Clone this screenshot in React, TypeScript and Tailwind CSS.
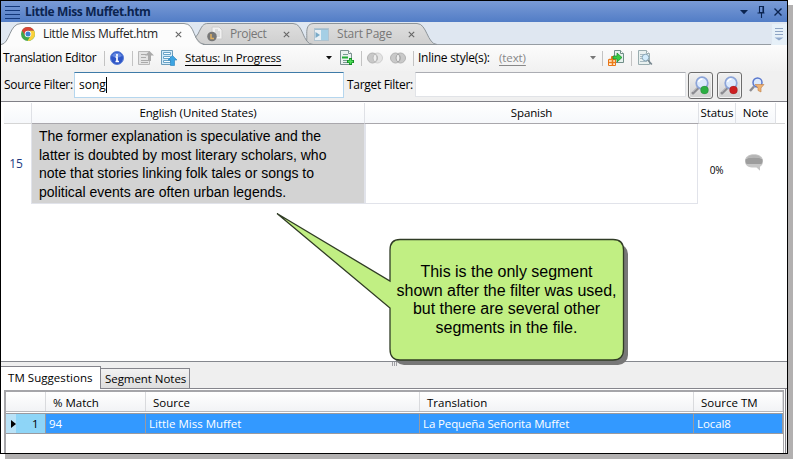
import React from "react";

const ui = "font-['Open_Sans','Noto_Sans',sans-serif] whitespace-nowrap";

function Close({ color = "#666" }: { color?: string }) {
  return (
    <svg width="7" height="7" viewBox="0 0 7 7" className="shrink-0">
      <path d="M.8 .8L6.2 6.2M6.2 .8L.8 6.2" stroke={color} strokeWidth="1.1" />
    </svg>
  );
}

function Sep({ className = "" }: { className?: string }) {
  return <div className={`h-[15px] w-px shrink-0 bg-[#c3c3c3] ${className}`} />;
}

function TitleBar() {
  return (
    <div className="flex h-[21px] shrink-0 items-center bg-linear-to-b from-[#7a9bd6] to-[#527dc6]">
      <svg width="15" height="14" viewBox="0 0 15 14" className="ml-1 shrink-0">
        <path d="M0 1.5H15M0 5.5H15M0 9.5H15M0 13.5H15" stroke="#14387a" />
      </svg>
      <span className={`${ui} ml-[5px] text-[12px] leading-[20px] font-bold tracking-[-0.38px] text-[#0b2450]`}>Little Miss Muffet.htm</span>
      <svg width="50" height="14" viewBox="0 0 50 14" className="mr-[2px] ml-auto shrink-0">
        <path d="M5 5h8L9 9.300z" fill="#0b2450" />
        <path d="M24.500 1.500h4v6h-4zM22.500 8h7M26.500 8v5M28 2v6" stroke="#0b2450" fill="none" strokeWidth="1.100" />
        <path d="M39.500 3.500l7 7M46.500 3.500l-7 7" stroke="#0b2450" strokeWidth="1.400" />
      </svg>
    </div>
  );
}

function Chrome() {
  return (
    <svg width="14" height="14" viewBox="0 0 14 14" className="shrink-0">
      <circle cx="7" cy="7" r="7" fill="#3fa64b" />
      <path d="M.9 3.500A7 7 0 0 1 13.100 3.800H7L4.300 8.500z" fill="#d94437" />
      <path d="M13.100 3.800A7 7 0 0 1 6.500 14L9.800 8.500L9 3.800z" fill="#fbd13c" />
      <circle cx="7" cy="7" r="3.300" fill="#fff" />
      <circle cx="7" cy="7" r="2.500" fill="#3e7fd0" />
    </svg>
  );
}

function Tabs() {
  return (
    <div className="relative flex h-[23px] shrink-0 items-center bg-[#dfe7f1]">
      <svg width="786" height="23" viewBox="1 22 786 23" className="absolute top-0 left-0">
        <defs>
          <linearGradient id="inactive" x1="0" y1="0" x2="0" y2="1">
            <stop offset="0" stopColor="#dedede" />
            <stop offset="1" stopColor="#cfcfcf" />
          </linearGradient>
        </defs>
        <rect x="772" y="24" width="15" height="21" fill="#e6f0f8" />
        <path d="M0 44.500H771" stroke="#969da3" />
        <path d="M304 44.500C311 43 301 23.500 314 23.500H417C427 23.500 427 44 437 44.500z" fill="url(#inactive)" stroke="#8d9499" />
        <path d="M190 44.500L198 34C202 26 203 23.500 208 23.500H293C304 23.500 302 44 313 44.500z" fill="url(#inactive)" stroke="#8d9499" />
        <path d="M1 44.500C10 44 9 23.500 21 23.500H184C196 23.500 192 43 203 44.500V46H1z" fill="#fcfcfc" />
        <path d="M1 44.500C10 44 9 23.500 21 23.500H184C196 23.500 192 43 205 44.500" fill="none" stroke="#8d9499" />
        <path d="M775 28.500h8M775 31.500h8M775 34.500h8" stroke="#8da4c4" />
        <path d="M774.500 37.500h9l-4.500 3z" fill="#8fa9cd" />
      </svg>
      <div className="relative flex h-full w-full items-center pt-px">
        <div className="flex w-[201px] items-center pl-[20px]">
          <Chrome />
          <span className={`${ui} ml-[8px] w-[132px] text-[12px] leading-[22px] tracking-[-0.34px] text-[#1e1e1e]`}>Little Miss Muffet.htm</span>
          <Close />
        </div>
        <div className="flex w-[112px] items-center pl-[5px]">
          <svg width="16" height="16" viewBox="0 0 16 16" className="shrink-0">
            <path d="M5 1h7l3 3v9H5z" fill="#f1f1f1" stroke="#ccc" />
            <path d="M8 4h3M8 6h5M9 8h4M10 10h3" stroke="#bbb" strokeWidth=".8" />
            <circle cx="5" cy="10.500" r="4.800" fill="#777" />
            <path d="M4 8v4.500h3" stroke="#e0b060" fill="none" strokeWidth="1.500" />
          </svg>
          <span className={`${ui} ml-[7px] w-[53px] text-[12px] leading-[22px] tracking-[-0.4px] text-[#777]`}>Project</span>
          <Close />
        </div>
        <div className="flex items-center">
          <svg width="15" height="13" viewBox="0 0 15 13" className="shrink-0">
            <rect x=".5" y=".5" width="14" height="12" fill="#e8eff4" stroke="#b1c3cf" />
            <rect x="7" y="2" width="7" height="10" fill="#a5cfe5" />
            <path d="M1 1.500h13" stroke="#9dbdd0" />
            <path d="M1.500 4L6 7L1.500 10z" fill="#79aac8" />
          </svg>
          <span className={`${ui} ml-[8px] w-[71px] text-[12px] leading-[22px] tracking-[-0.2px] text-[#777]`}>Start Page</span>
          <Close />
        </div>
      </div>
    </div>
  );
}

function Page({ children, color = "#7b9190" }: { children?: React.ReactNode; color?: string }) {
  return (
    <svg width="16" height="16" viewBox="0 0 16 16" className="shrink-0">
      <path d="M.5 .5h8l3 3v11h-11z" fill="#e9f1f0" stroke={color} />
      <path d="M8.500 .5v3h3" fill="#fff" stroke={color} />
      {children}
    </svg>
  );
}

function Toolbar() {
  return (
    <div className="flex h-[26px] shrink-0 items-center bg-linear-to-b from-[#fcfcfc] to-[#f1f1f1]">
      <span className={`${ui} ml-[2px] w-[101px] text-[12px] tracking-[-0.34px]`}>Translation Editor</span>
      <Sep />
      <svg width="14" height="14" viewBox="0 0 14 14" className="ml-[5px] shrink-0">
        <circle cx="7" cy="7" r="6.500" fill="#2e55c6" stroke="#5c80d8" />
        <path d="M2 5a5.500 5.500 0 0 1 10 0q-5 3-10 0" fill="#6489e2" />
        <path d="M7 3v2M5.500 6H7v4M5.500 10.500h3.500" stroke="#fff" strokeWidth="1.700" fill="none" />
      </svg>
      <Sep className="ml-[8px]" />
      <svg width="16" height="16" viewBox="0 0 16 16" className="ml-[5px] shrink-0">
        <path d="M.5 1.500h11v13H.5z" fill="#e4e4e4" stroke="#b9b9b9" />
        <path d="M3 4.500h5M3 7.500h5M3 10.500h7M3 12.500h7" stroke="#aaa" />
        <path d="M11.500 1L16 5.500h-3V11h-3V5.500H7z" fill="#aaa" />
      </svg>
      <svg width="16" height="16" viewBox="0 0 16 16" className="ml-[7px] shrink-0">
        <path d="M.5 .5h11v14H.5z" fill="#d5edfb" stroke="#6c9cba" />
        <path d="M2.500 2.500h7v2h-7zM2.500 6.500h7v2h-7zM2.500 10.500h7v2h-7z" fill="#f7fdff" stroke="#68a3c8" />
        <path d="M11.500 5.500L16 10h-2.500v5.500h-4V10H7z" fill="#3ca4e2" stroke="#247fbd" strokeWidth=".6" />
      </svg>
      <span className={`${ui} ml-[8px] w-[141px] text-[11.500px] leading-[14px] tracking-[-0.18px] underline underline-offset-[3px]`}>Status: In Progress</span>
      <svg width="6" height="4" className="shrink-0"><path d="M0 0h6L3 3.500z" fill="#111" /></svg>
      <div className="ml-[8px] flex">
        <Page>
          <path d="M3 4.500h5M3 10.500h4M3 12.500h4" stroke="#789b92" />
          <path d="M2 7.500h6" stroke="#22ad36" strokeWidth="2" />
          <path d="M10.500 8v7M7 11.500h7" stroke="#168e28" strokeWidth="3" />
          <path d="M10.500 9v5M8 11.500h5" stroke="#4ede58" strokeWidth="1.500" />
        </Page>
      </div>
      <Sep className="ml-[5px]" />
      <svg width="16" height="12" viewBox="0 0 16 12" className="ml-[5px] shrink-0">
        <circle cx="10.500" cy="6" r="5" fill="#e3e3e3" stroke="#cfcfcf" />
        <circle cx="5.500" cy="6" r="5" fill="#c8c8c8" stroke="#b2b2b2" />
        <path d="M8 2a5 5 0 0 1 0 8a5 5 0 0 1 0-8" fill="#eee" stroke="#bbb" />
      </svg>
      <svg width="16" height="12" viewBox="0 0 16 12" className="ml-[7px] shrink-0">
        <circle cx="10.500" cy="6" r="5" fill="#c9c9c9" stroke="#b2b2b2" />
        <circle cx="5.500" cy="6" r="5" fill="#c9c9c9" stroke="#b2b2b2" />
        <path d="M8 2a5 5 0 0 1 0 8a5 5 0 0 1 0-8" fill="#eee" stroke="#a4a4a4" />
      </svg>
      <Sep className="ml-[7px]" />
      <span className={`${ui} ml-[4px] w-[81px] text-[12px] tracking-[-0.26px]`}>Inline style(s):</span>
      <span className={`${ui} w-[91px] text-[11.500px] leading-[14px] tracking-[-0.1px] text-[#888] underline underline-offset-[3px]`}>(text)</span>
      <svg width="6" height="4" className="shrink-0"><path d="M0 0h6L3 3.500z" fill="#777" /></svg>
      <Sep className="ml-[6px]" />
      <svg width="17" height="17" viewBox="0 0 17 17" className="ml-[5px] shrink-0">
        <path d="M6.500 .5h6l3 3v9h-9z" fill="#e6f1ee" stroke="#718e88" />
        <path d="M12.500 .5v3h3" fill="#fff" stroke="#718e88" />
        <path d="M3.500 6.500h4v9h-7v-6h3z" fill="#fff0d8" stroke="#e77518" />
        <path d="M1 9.500h7M1 12.500h7M4.500 7v9" stroke="#ed7b19" strokeWidth="1.500" />
        <path d="M5 6h4V3l5 4.500L9 12V9H5z" fill="#36cc45" stroke="#158728" strokeWidth=".7" />
      </svg>
      <Sep className="ml-[6px]" />
      <div className="ml-[6px] flex">
        <Page color="#9aadb0">
          <path d="M2 4.500h6M2 6.500h7M2 8.500h7M2 11.500h7" stroke="#a8bac2" />
          <circle cx="7.500" cy="7.500" r="3.300" fill="#d2ecfb" stroke="#8ba8b8" />
          <path d="M9.800 10l4 4.500" stroke="#788790" strokeWidth="1.700" />
        </Page>
      </div>
    </div>
  );
}

function Lens({ dot }: { dot?: string }) {
  return (
    <svg width="19" height="19" viewBox="0 0 19 19">
      <path d="M2 17L7.500 11.500" stroke="#8c8c91" strokeWidth="3" strokeLinecap="round" />
      <path d="M1.500 16L7 10.500" stroke="#d8d8dc" strokeWidth="1" />
      <circle cx="11" cy="7" r="5.800" fill="#dceafd" stroke="#8ca4d8" strokeWidth="1.700" />
      <path d="M7.500 6q1-3 4-3" stroke="#fff" strokeWidth="1.500" fill="none" />
      {dot && <circle cx="13.500" cy="14" r="4" fill={dot} stroke="#00000035" strokeWidth=".6" />}
    </svg>
  );
}

function Filters() {
  const btn = "flex h-[27px] w-[25px] shrink-0 items-center justify-center rounded-[3px] border border-[#6d6d6d] bg-linear-to-b from-[#f2f2f2] to-[#cfcfcf] shadow-[inset_0_0_0_1px_#f4f4f4]";
  return (
    <div className="flex h-[31px] shrink-0 items-start border-b border-[#808087] bg-[#f0f0f0] pt-px">
      <span className={`${ui} ml-[3px] w-[70px] text-[12px] leading-[25px] tracking-[-0.3px]`}>Source Filter:</span>
      <div className={`${ui} flex h-[26px] w-[270px] items-center border border-[#b5d6ee] border-t-[#3e7ba8] bg-white pl-1 text-[12px] leading-[24px]`}>
        song<span className="h-[16px] w-px bg-black" />
      </div>
      <span className={`${ui} ml-[3px] w-[68px] text-[12px] leading-[25px] tracking-[-0.3px]`}>Target Filter:</span>
      <div className="h-[25px] w-[271px] border border-[#e1e3e7] border-t-[#abadb3] bg-white" />
      <div className={`${btn} ml-[2px]`}><Lens dot="#2bae42" /></div>
      <div className={`${btn} ml-[4px]`}><Lens dot="#cc1f22" /></div>
      <svg width="16" height="16" viewBox="0 0 16 16" className="mt-[5px] ml-[7px]">
        <path d="M1 14L5 9.500" stroke="#8c8c91" strokeWidth="2.400" />
        <circle cx="8.500" cy="5.500" r="4.500" fill="#dceafd" stroke="#5977cd" strokeWidth="1.500" />
        <path d="M6 7.500h9L12 11v4l-3-1.500V11z" fill="#eeb273" stroke="#bd7c43" strokeWidth=".6" />
      </svg>
    </div>
  );
}

function Segments() {
  const h = `${ui} flex h-[21px] items-center justify-center border-r border-b border-r-[#dfe1e6] text-[11.500px] tracking-[-0.1px] bg-linear-to-b from-white to-[#f6f8fb]`;
  return (
    <div className="h-[260px] shrink-0 border-b border-[#85888e] bg-white pt-px">
      <div className="flex pl-[3px]">
        <div className={`${h} w-[28px] border-b-[#d5d5d5]`} />
        <div className={`${h} w-[333px] border-b-[#a9a7ac]`}>English (United States)</div>
        <div className={`${h} w-[334px] border-b-[#a9a7ac]`}>Spanish</div>
        <div className={`${h} w-[37px] border-b-[#d5d5d5]`}>Status</div>
        <div className={`${h} w-[40px] border-b-[#d5d5d5]`}>Note</div>
        <div className="h-[21px] w-[9px] border-b border-[#d5d5d5]" />
      </div>
      <div className="flex h-[80px]">
        <div className={`${ui} w-[30px] text-center text-[12px] leading-[79px] text-[#1d3a80]`}>15</div>
        <div className="w-[334px] border border-t-0 border-[#e1e3ea] bg-[#d3d3d3] pt-[3px] pl-[7px] font-['Liberation_Sans',Arial,sans-serif] text-[14px] leading-[18.660px] tracking-[-0.01px] whitespace-nowrap text-black">
          <div>The former explanation is speculative and the</div>
          <div>latter is doubted by most literary scholars, who</div>
          <div>note that stories linking folk tales or songs to</div>
          <div>political events are often urban legends.</div>
        </div>
        <div className="w-[333px] border border-t-0 border-[#e1e3ea]" />
        <div className={`${ui} w-[37px] pt-[6px] text-center text-[10px] leading-[80px] tracking-[-0.3px]`}>0%</div>
        <svg width="20" height="18" viewBox="0 0 20 18" className="mt-[30px] ml-[9px]">
          <path d="M10 .3C4.500 .3 1 3 1 7.200S4 13.500 10 13.500h2.500l3.500 3.200v-4C18 11.500 19 10 19 7.200C19 3 15.500 .3 10 .3z" fill="#c6c6c6" />
          <path d="M1.500 5.500Q3.500 3.500 10 3.500t8.500 2q.3 3-1 4.500H2.500Q1.200 8 1.500 5.500z" fill="#9d9d9d" />
          <path d="M3 4Q5 1 10 1t7 3Q14 3.500 10 3.500T3 4z" fill="#b5b5b5" />
        </svg>
      </div>
    </div>
  );
}

function Suggestions() {
  const h = `${ui} flex h-[19px] items-center border-r border-[#d9dadd] pt-[2px] text-[11.500px]`;
  const c = `${ui} flex h-[19px] items-center border-r border-[#9a9a9f] bg-[#3399ff] pl-[3px] text-[11.500px] text-white`;
  return (
    <div className="flex min-h-0 flex-1 flex-col bg-[#efefef] pt-1">
      <div className="flex h-[23px] shrink-0 items-end">
        <div className={`${ui} flex h-[23px] w-[100px] items-center border-t border-r border-[#85858c] bg-white pl-[7px] text-[11.500px] tracking-[0.05px]`}>TM Suggestions</div>
        <div className={`${ui} flex h-[21px] w-[89px] items-center border border-l-0 border-[#85858c] bg-linear-to-b from-[#f2f2f2] to-[#dedede] pt-px pl-[4px] text-[11.500px] tracking-[-0.05px]`}>Segment Notes</div>
        <div className="h-px flex-1 bg-[#85858c]" />
      </div>
      <div className="mr-px min-h-0 flex-1 border-r border-[#85858c] bg-white pt-px pr-px pl-[3px]">
        <div className="h-full border-2 border-r border-b-0 border-[#a5a5a9]">
          <div className="flex border-b border-[#b7b7bb] bg-linear-to-b from-white to-[#f2f3f5]">
            <div className={`${h} w-[40px]`} />
            <div className={`${h} w-[100px] pl-[7px]`}>% Match</div>
            <div className={`${h} w-[274px] pl-[7px]`}>Source</div>
            <div className={`${h} w-[274px] pl-[7px]`}>Translation</div>
            <div className={`${h} w-[89px] pl-[7px]`}>Source TM</div>
          </div>
          <div className="mt-px flex border-t border-b border-[#9a9a9f]">
            <div className={`${ui} flex h-[19px] w-[40px] items-center border-r border-[#9a9a9f] bg-linear-to-r from-[#b9e2f7] from-25% to-[#8ed5f7] to-25% text-[11.500px]`}>
              <svg width="5" height="8" className="ml-[5px]"><path d="M0 0L5 4L0 8z" fill="#000" /></svg>
              <span className="ml-[16px]">1</span>
            </div>
            <div className={`${c} w-[100px]`}>94</div>
            <div className={`${c} w-[274px]`}>Little Miss Muffet</div>
            <div className={`${c} w-[274px] tracking-[-0.12px]`}>La Pequeña Señorita Muffet</div>
            <div className={`${c} w-[89px] tracking-[-0.1px]`}>Local8</div>
          </div>
        </div>
      </div>
    </div>
  );
}

function Callout() {
  const d = "M400 239.500H613Q623.500 239.500 623.500 250V349Q623.500 360 613 360H400Q390 360 390 349V308L277 213.500L390 281V250Q390 239.500 400 239.500z";
  return (
    <div className="absolute top-0 left-0">
      <svg width="640" height="380" viewBox="0 0 640 380" className="block">
        <path d="M392.500 362v4M394.500 362v4M396.500 362v4" stroke="#a0a0a4" />
        <rect x="394" y="244" width="234" height="121" rx="10" fill="#777" />
        <path d={d} fill="#c1ef83" stroke="#303c25" strokeWidth="1.300" />
      </svg>
      <div className="absolute top-[263px] left-[391px] w-[231px] text-center font-['Liberation_Sans',Arial,sans-serif] text-[16px] leading-[18.500px] tracking-[-0.02px] whitespace-nowrap text-black">
        <div>This is the only segment</div>
        <div>shown after the filter was used,</div>
        <div>but there are several other</div>
        <div>segments in the file.</div>
      </div>
    </div>
  );
}

export default function App() {
  return (
    <div className="relative h-[459px] w-[793px] overflow-hidden bg-white">
      <div className="relative h-[454px] w-[788px] shadow-[5px_5px_0_0_#b2b0b0]">
        <div className="flex h-full flex-col overflow-hidden border border-black">
          <TitleBar />
          <Tabs />
          <Toolbar />
          <Filters />
          <Segments />
          <Suggestions />
        </div>
      </div>
      <Callout />
    </div>
  );
}
